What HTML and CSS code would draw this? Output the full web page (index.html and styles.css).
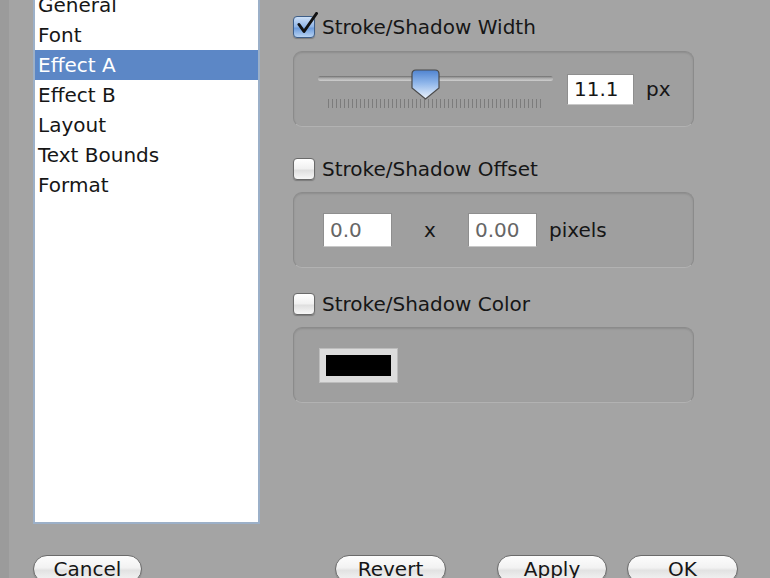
FILE: index.html
```html
<!DOCTYPE html>
<html lang="en">
<head>
  <meta charset="UTF-8">
  <title>Effect A</title>
  <link rel="stylesheet" href="styles.css">
</head>
<body>
  <div class="window">
    <div class="main">
      <!-- category list -->
      <ul class="list">
        <li>General</li>
        <li>Font</li>
        <li class="selected">Effect A</li>
        <li>Effect B</li>
        <li>Layout</li>
        <li>Text Bounds</li>
        <li>Format</li>
      </ul>

      <!-- settings -->
      <div class="panel">
        <div class="section">
          <label class="check-row">
            <span class="checkbox checked">
              <svg class="tick" width="26" height="26" viewBox="0 0 26 26">
                <path d="M6 12.5 L11 19.5 L23.5 1.5" fill="none" stroke="#111" stroke-width="3" stroke-linecap="round" stroke-linejoin="round"/>
              </svg>
            </span>
            Stroke/Shadow Width
          </label>
          <div class="group group-width">
            <div class="slider">
              <div class="track"></div>
              <div class="ticks"></div>
              <svg class="thumb" width="29" height="31" viewBox="0 0 29 31">
                <defs>
                  <linearGradient id="tg" x1="0" y1="0" x2="0" y2="1">
                    <stop offset="0" stop-color="#4f83d0"/>
                    <stop offset="0.45" stop-color="#8fb6ea"/>
                    <stop offset="1" stop-color="#eef4fb"/>
                  </linearGradient>
                </defs>
                <path d="M5 1 H24 Q28 1 28 5 V19 L14.5 30 L1 19 V5 Q1 1 5 1 Z" fill="url(#tg)" stroke="#4a4a4a" stroke-width="1.2"/>
              </svg>
            </div>
            <div class="field field-width">11.1</div>
            <span class="unit">px</span>
          </div>
        </div>

        <div class="section section-offset">
          <label class="check-row">
            <span class="checkbox"></span>
            Stroke/Shadow Offset
          </label>
          <div class="group group-offset">
            <div class="field field-num">0.0</div>
            <span class="times">x</span>
            <div class="field field-num">0.00</div>
            <span class="unit">pixels</span>
          </div>
        </div>

        <div class="section section-color">
          <label class="check-row">
            <span class="checkbox"></span>
            Stroke/Shadow Color
          </label>
          <div class="group group-color">
            <div class="well"><div class="swatch"></div></div>
          </div>
        </div>
      </div>
    </div>

    <div class="footer">
      <button class="button cancel">Cancel</button>
      <button class="button revert">Revert</button>
      <button class="button apply">Apply</button>
      <button class="button ok">OK</button>
    </div>
  </div>
</body>
</html>
```

FILE: styles.css
```css
* {
  margin: 0;
  padding: 0;
  box-sizing: border-box;
}
body, html {
  width: 100%;
  height: 100%;
  overflow: hidden;
  background: #a4a4a4;
  font-family: 'DejaVu Sans', 'Liberation Sans', sans-serif;
  font-size: 20px;
  color: #161616;
}

.window {
  height: 578px;
  border-left: 9px solid #9b9b9b;
  display: flex;
  flex-direction: column;
  overflow: hidden;
}

.main {
  flex: none;
  height: 555px;
  display: flex;
  padding-left: 24px;
  gap: 33px;
}

/* list */
.list {
  list-style: none;
  width: 227px;
  height: 536px;
  margin-top: -12px;
  background: #fff;
  border: 2px solid #9cb0c8;
}
.list li {
  height: 30px;
  line-height: 30px;
  padding-left: 3px;
}
.list li.selected {
  background: #5c87c6;
  color: #fff;
}

/* right side */
.panel {
  width: 401px;
  padding-top: 16px;
}
.section-offset {
  margin-top: 31px;
}
.section-color {
  margin-top: 25px;
}

.check-row {
  display: flex;
  align-items: center;
  gap: 7px;
  height: 22px;
  margin-bottom: 13px;
  white-space: nowrap;
}
.section-offset .check-row,
.section-color .check-row {
  margin-bottom: 12px;
}

.checkbox {
  position: relative;
  flex: none;
  width: 22px;
  height: 22px;
  border: 1px solid #6a6a6a;
  border-radius: 4px;
  background: linear-gradient(#ffffff, #f0f0f0 50%, #dedede 55%, #f7f7f7);
  box-shadow: 0 1px 1px rgba(0,0,0,0.25);
}
.checkbox.checked {
  border-color: #3e5e88;
  background: linear-gradient(#cde0f7, #8fb4e6 50%, #6b9bdc 55%, #b8d3f3);
}
.tick {
  position: absolute;
  left: -1px;
  top: -5px;
}

.group {
  height: 76px;
  display: flex;
  align-items: center;
  background: #9f9f9f;
  border: 1px solid #8b8b8b;
  border-bottom-color: #b2b2b2;
  border-radius: 9px;
  box-shadow: inset 0 1px 2px rgba(0,0,0,0.12);
}

/* slider */
.group-width {
  padding-left: 24px;
}
.slider {
  position: relative;
  width: 235px;
  height: 40px;
  margin-right: 14px;
}
.track {
  position: absolute;
  left: 0;
  right: 0;
  top: 7px;
  height: 5px;
  border-radius: 3px;
  background: linear-gradient(#6e6e6e, #a8a8a8 40%, #cfcfcf);
}
.ticks {
  position: absolute;
  left: 10px;
  right: 10px;
  top: 30px;
  height: 9px;
  background: repeating-linear-gradient(90deg, #7c7c7c 0 1px, transparent 1px 4px);
}
.thumb {
  position: absolute;
  left: 93px;
  top: 0;
}

.field {
  background: #fff;
  border: 1px solid #8e8e8e;
  border-bottom-color: #c8c8c8;
  padding-left: 6px;
  white-space: nowrap;
}
.field-width {
  width: 67px;
  height: 31px;
  line-height: 29px;
  margin-right: 12px;
}
.unit {
  white-space: nowrap;
}

.group-offset {
  padding-left: 29px;
}
.field-num {
  width: 69px;
  height: 34px;
  line-height: 32px;
  color: #666;
}
.times {
  width: 76px;
  text-align: center;
}
.group-offset .field-num + .unit {
  margin-left: 12px;
}

.group-color {
  padding-left: 25px;
}
.well {
  width: 79px;
  height: 35px;
  padding: 6px;
  background: #dcdcdc;
  border: 1px solid #bdbdbd;
}
.swatch {
  width: 100%;
  height: 100%;
  background: #000;
}

/* buttons */
.footer {
  display: flex;
  padding: 0 32px 0 24px;
}
.button {
  height: 28px;
  width: 110px;
  border: 1px solid #6b6b6b;
  border-radius: 14px;
  background: linear-gradient(#fdfdfd, #f2f2f2 45%, #e2e2e2 55%, #f6f6f6);
  box-shadow: 0 1px 1px rgba(0,0,0,0.2);
  font-family: inherit;
  font-size: 20px;
  line-height: 26px;
  color: #161616;
}
.cancel {
  width: 109px;
}
.revert {
  width: 111px;
  margin-left: auto;
}
.apply {
  margin-left: 51px;
}
.ok {
  width: 111px;
  margin-left: 20px;
}
```
